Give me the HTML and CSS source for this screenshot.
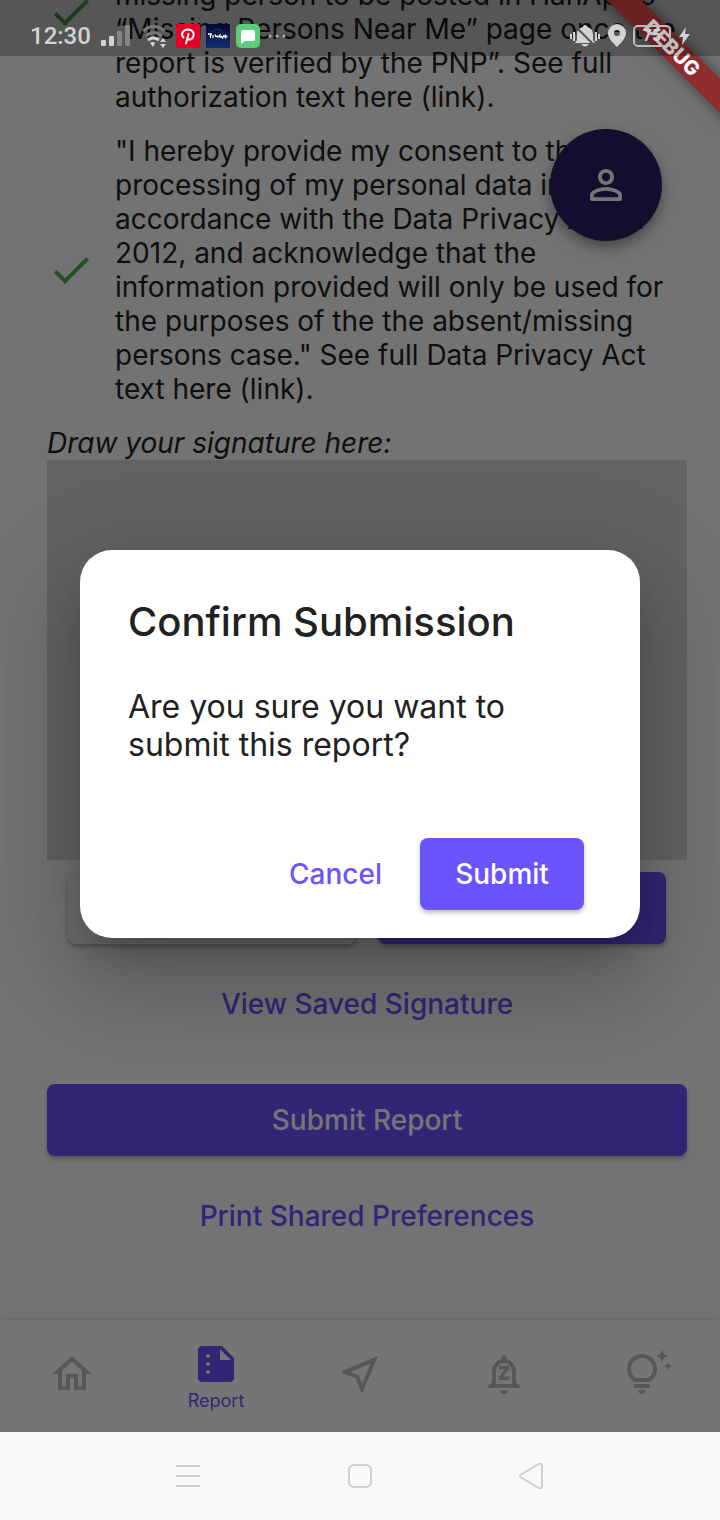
FILE: index.html
```html
<!DOCTYPE html>
<html lang="en">
<head>
<meta charset="utf-8">
<meta name="viewport" content="width=device-width, initial-scale=1">
<title>Confirm Submission</title>
<link rel="stylesheet" href="styles.css">
</head>
<body>
<div class="screen">
  <div class="app">
    <main class="page">
      <div class="consent">
        <svg class="check" viewBox="0 0 24 24" aria-hidden="true"><path d="M9 16.17 4.83 12l-1.42 1.41L9 19 21 7l-1.41-1.41z"/></svg>
        <p class="consent-text">missing person to be posted in HanApp’s “Missing Persons Near Me” page once the report is verified by the PNP”. See full authorization text here (link).</p>
      </div>
      <div class="consent">
        <svg class="check" viewBox="0 0 24 24" aria-hidden="true"><path d="M9 16.17 4.83 12l-1.42 1.41L9 19 21 7l-1.41-1.41z"/></svg>
        <p class="consent-text">"I hereby provide my consent to the processing of my personal data in accordance with the Data Privacy Act of 2012, and acknowledge that the information provided will only be used for the purposes of the the absent/missing persons case." See full Data Privacy Act text here (link).</p>
      </div>
      <p class="sign-label">Draw your signature here:</p>
      <div class="sign-pad"></div>
      <div class="sign-actions">
        <button class="btn btn-light" type="button" aria-label="Clear"></button>
        <button class="btn btn-primary" type="button" aria-label="Save"></button>
      </div>
      <button class="btn btn-text view-saved" type="button">View Saved Signature</button>
      <button class="btn btn-primary submit-report" type="button">Submit Report</button>
      <button class="btn btn-text print-prefs" type="button">Print Shared Preferences</button>
      <button class="fab" type="button" aria-label="Profile">
        <svg viewBox="0 0 24 24" aria-hidden="true"><path d="M12 5.9a2.1 2.1 0 1 1 0 4.2 2.1 2.1 0 0 1 0-4.2m0 9c2.97 0 6.1 1.46 6.1 2.1v1.1H5.9V17c0-.64 3.13-2.1 6.1-2.1M12 4C9.79 4 8 5.79 8 8s1.79 4 4 4 4-1.790 4-4-1.790-4-4-4zm0 9c-2.670 0-8 1.340-8 4v2c0 .55.45 1 1 1h14c.55 0 1-.45 1-1v-2c0-2.660-5.330-4-8-4z"/></svg>
      </button>
    </main>
    <nav class="tabs">
      <a class="tab" href="#" aria-label="Home"><svg viewBox="0 0 24 24" aria-hidden="true"><path d="m12 5.690 5 4.500V18h-2v-6H9v6H7v-7.810zM12 3 2 12h3v8h6v-6h2v6h6v-8h3z"/></svg></a>
      <a class="tab active" href="#"><svg viewBox="0 0 24 24" aria-hidden="true"><path d="M15 3H5c-1.100 0-2 .9-2 2v14c0 1.100.9 2 2 2h14c1.100 0 2-.9 2-2V9zM8 17c-.55 0-1-.45-1-1s.45-1 1-1 1 .45 1 1-.45 1-1 1m0-4c-.55 0-1-.45-1-1s.45-1 1-1 1 .45 1 1-.45 1-1 1m0-4c-.55 0-1-.45-1-1s.45-1 1-1 1 .45 1 1-.45 1-1 1m6 1V4.500l5.500 5.500z"/></svg><span>Report</span></a>
      <a class="tab" href="#" aria-label="Nearby"><svg viewBox="0 0 24 24" aria-hidden="true"><path d="m17.270 6.730-4.240 10.130-1.320-3.420-.32-.83-.82-.32-3.430-1.330zM21 3 3 10.530v.98l6.840 2.650L12.480 21h.98z"/></svg></a>
      <a class="tab" href="#" aria-label="Notifications"><svg viewBox="0 0 24 24" aria-hidden="true"><path d="M18 16v-5c0-3.070-1.640-5.640-4.500-6.320V4c0-.83-.67-1.500-1.500-1.500s-1.500.67-1.500 1.500v.68C7.630 5.360 6 7.920 6 11v5l-2 2v1h16v-1zm-2 1H8v-6c0-2.480 1.510-4.500 4-4.500s4 2.020 4 4.500zm-4 5c1.100 0 2-.9 2-2h-4c0 1.100.89 2 2 2M9.500 9.800h2.800l-2.800 3.400V15h5v-1.800h-2.800l2.800-3.400V8h-5z"/></svg></a>
      <a class="tab" href="#" aria-label="Tips"><svg viewBox="0 0 24 24" aria-hidden="true"><path d="M7 20h4c0 1.100-.9 2-2 2s-2-.9-2-2m-2-1h8v-2H5zm11.500-9.500c0 3.820-2.660 5.860-3.770 6.500H5.270c-1.110-.64-3.770-2.680-3.770-6.500C1.500 5.360 4.860 2 9 2s7.500 3.360 7.500 7.500m-2 0C14.500 6.470 12.030 4 9 4S3.500 6.470 3.500 9.500c0 2.470 1.490 3.890 2.350 4.500h6.300c.86-.61 2.350-2.030 2.350-4.500m6.870-2.130L20 8l1.370.63L22 10l.63-1.370L24 8l-1.370-.63L22 6zM19 6l.94-2.060L22 3l-2.060-.94L19 0l-.94 2.060L16 3l2.060.94z"/></svg></a>
    </nav>

    <div class="scrim">
      <section class="dialog" role="dialog" aria-modal="true" aria-labelledby="dialog-title">
        <h1 id="dialog-title">Confirm Submission</h1>
        <p>Are you sure you want to submit this report?</p>
        <div class="dialog-actions">
          <button class="btn btn-text" type="button">Cancel</button>
          <button class="btn btn-primary" type="button">Submit</button>
        </div>
      </section>
    </div>

    <div class="ribbon-corner"><span class="ribbon">DEBUG</span></div>

    <header class="status">
      <div class="status-left">
        <time>12:30</time>
        <svg class="signal" viewBox="0 0 30 24" aria-hidden="true"><g fill="#d2d2d2"><rect x="0" y="16" width="5" height="6" rx="1"/><rect x="8" y="12" width="5" height="10" rx="1"/></g><g fill="#858585"><rect x="16" y="7" width="5" height="15" rx="1"/><rect x="24" y="1" width="5" height="21" rx="1"/></g></svg>
        <svg class="wifi" viewBox="0 0 28 24" aria-hidden="true"><g fill="none" stroke-width="3"><path stroke="#777" d="M1 7q11-9 22 0M4 12q8-7 16 0"/><path stroke="#d2d2d2" d="M6 16q5-4 11 0"/></g><path fill="#d2d2d2" d="M8 19q3-2 5 0l-2 4zM18 18l3-4 3 4zM18 20h6l-3 4z"/></svg>
        <svg class="badge" viewBox="0 0 24 24" aria-hidden="true"><rect width="24" height="24" rx="1" fill="#e60023"/><path fill="none" stroke="#fff" stroke-width="2" stroke-linecap="round" stroke-linejoin="round" d="M7.500 13.500C4 9.500 7.500 5.500 12 5.500c4 0 6.500 3 5.500 6.500-1 4-5 4.500-6 2M12.500 10 10 19.500"/></svg>
        <svg class="badge" viewBox="0 0 24 24" aria-hidden="true"><defs><linearGradient id="night" x2="0" y2="1"><stop stop-color="#050730"/><stop offset="1" stop-color="#112f72"/></linearGradient></defs><rect width="24" height="24" rx="1" fill="url(#night)"/><path fill="none" stroke="#fff" stroke-width="1.300" d="M2 10h4M4.500 10v4M7 11v3M9 10.500l1 2h2M12 13l2-2v3M15 12l1.500 2 1.500-3M19.500 10.500v4M17.500 12.500h4"/><path fill="none" stroke="#3ab7d5" stroke-width=".8" stroke-dasharray="1 2" d="M6 8q7-6 12 2"/></svg>
        <svg class="badge" viewBox="0 0 24 24" aria-hidden="true"><rect width="24" height="24" rx="5" fill="#5bce79"/><path fill="#fff" d="M7 6h10q2 0 2 2v7q0 2-2 2H9l-4 3V8q0-2 2-2z"/></svg>
        <svg class="more" viewBox="0 0 20 24" aria-hidden="true"><g fill="#b4b4b4"><circle cx="2" cy="12" r="1.500"/><circle cx="9" cy="12" r="1.500"/><circle cx="16" cy="12" r="1.500"/></g></svg>
      </div>
      <div class="status-right">
        <svg class="mute" viewBox="0 0 32 24" aria-hidden="true"><path fill="#d2d2d2" d="M16 1q2 0 2 2 6 1 6 8v5l2 3H6l2-3v-5q0-7 6-8 0-2 2-2zM12 20h8q-4 5-8 0"/><path fill="none" stroke="#d2d2d2" stroke-width="2" d="M2 10v5M5 8v9M27 8v9M30 10v5"/><path stroke="#565656" stroke-width="2" d="m6 2 20 20"/></svg>
        <svg class="pin" viewBox="0 0 18 24" aria-hidden="true"><path fill="#d2d2d2" fill-rule="evenodd" d="M9 0a9 9 0 0 1 9 9c0 5-5 10-9 14C5 19 0 14 0 9a9 9 0 0 1 9-9zm0 6a3 3 0 1 0 0 6 3 3 0 0 0 0-6z"/></svg>
        <span class="battery">75</span>
        <svg class="bolt" viewBox="0 0 12 18" aria-hidden="true"><path fill="#d2d2d2" d="M8 0 1 10h4l-1 8 8-11H7z"/></svg>
      </div>
    </header>
  </div>

  <footer class="system-nav">
    <button type="button" aria-label="Recent apps"><svg viewBox="0 0 28 28" aria-hidden="true"><path d="M2 4h24M2 14h24M2 24h24"/></svg></button>
    <button type="button" aria-label="Home"><svg viewBox="0 0 28 28" aria-hidden="true"><rect x="3" y="3" width="22" height="22" rx="5"/></svg></button>
    <button type="button" aria-label="Back"><svg viewBox="0 0 28 28" aria-hidden="true"><path d="M3 12.500 21 2q3-1 3 2v20q0 3-3 2L3 15.500q-2-1.500 0-3z"/></svg></button>
  </footer>
</div>
</body>
</html>
```
FILE: styles.css
```css
* { box-sizing: border-box; }

body {
  margin: 0;
  font-family: Inter, "Liberation Sans", sans-serif;
  font-size: 28px;
  line-height: 34px;
  color: #212121;
}

p, h1 { margin: 0; }

button {
  font: inherit;
  border: 0;
  padding: 0;
  background: none;
}

.screen {
  display: flex;
  flex-direction: column;
  height: 100vh;
}

.app {
  position: relative;
  flex: 1;
  min-height: 0;
  display: flex;
  flex-direction: column;
  background: #fafafa;
  overflow: hidden;
}

/* Scrolled form */
.page {
  flex: 1;
  min-height: 0;
  display: flex;
  flex-direction: column;
  justify-content: flex-end;
  padding: 0 33px 68px 47px;
  overflow: hidden;
}

.page > * { flex-shrink: 0; }

.consent {
  display: flex;
  align-items: center;
  gap: 20px;
  min-height: 204px;
  margin-bottom: 20px;
}

.check {
  flex: none;
  width: 48px;
  height: 48px;
  fill: #4caf50;
}

.consent-text {
  flex: 1;
  align-self: flex-end;
}

.sign-label { font-style: italic; }

.sign-pad {
  height: 400px;
  background: #dbd8d4;
}

.btn {
  height: 72px;
  border-radius: 8px;
  font-weight: 500;
}

.btn-primary {
  background: #6b54ff;
  color: #fff;
  box-shadow: 0 3px 4px rgba(0, 0, 0, .25);
}

.btn-light {
  background: #f5f5f5;
  box-shadow: 0 3px 4px rgba(0, 0, 0, .25);
}

.btn-text { color: #6b54ff; }

.sign-actions {
  display: grid;
  grid-template-columns: 1fr 1fr;
  gap: 22px;
  padding: 12px 21px 0;
}

.view-saved { margin-top: 24px; }
.submit-report { margin-top: 44px; }
.print-prefs { margin-top: 24px; }

.fab {
  position: absolute;
  top: 129px;
  right: 58px;
  width: 112px;
  height: 112px;
  display: grid;
  place-items: center;
  border-radius: 50%;
  background: #2e1e63;
  box-shadow: 0 6px 14px rgba(0, 0, 0, .4);
}

.fab svg {
  width: 48px;
  height: 48px;
  fill: #fff;
}

/* Bottom tabs */
.tabs {
  flex: none;
  display: flex;
  height: 112px;
  background: #fff;
  box-shadow: 0 -1px 4px rgba(0, 0, 0, .12);
}

.tab {
  flex: 1;
  display: flex;
  flex-direction: column;
  align-items: center;
  justify-content: center;
  gap: 2px;
  padding-bottom: 4px;
  color: #bdbdbd;
  font-size: 18px;
  line-height: 22px;
  text-decoration: none;
}

.tab svg {
  width: 48px;
  height: 48px;
  fill: currentColor;
  overflow: visible;
}

.tab.active {
  padding-bottom: 0;
  color: #6b54ff;
}

/* Dialog */
.scrim {
  position: absolute;
  inset: 0;
  display: flex;
  align-items: center;
  padding: 56px 80px 0;
  background: rgba(0, 0, 0, .54);
}

.dialog {
  flex: 1;
  padding: 48px 56px 28px 48px;
  border-radius: 32px;
  background: #fff;
  box-shadow: 0 22px 30px -14px rgba(0, 0, 0, .2), 0 48px 76px 6px rgba(0, 0, 0, .14), 0 18px 92px 16px rgba(0, 0, 0, .12);
}

.dialog h1 {
  font-size: 40px;
  font-weight: 500;
  line-height: 48px;
}

.dialog p {
  margin-top: 42px;
  font-size: 32px;
  line-height: 38px;
}

.dialog-actions {
  display: flex;
  justify-content: flex-end;
  gap: 22px;
  margin-top: 74px;
}

.dialog-actions .btn-primary { min-width: 164px; }
.dialog-actions .btn-text { padding: 0 16px; }

/* Debug ribbon */
.ribbon-corner {
  position: absolute;
  top: 0;
  right: 0;
  width: 160px;
  height: 160px;
  overflow: hidden;
}

.ribbon {
  position: absolute;
  top: 36px;
  right: -52px;
  width: 200px;
  text-align: center;
  transform: rotate(45deg);
  background: #8f2b2e;
  box-shadow: 0 0 14px rgba(0, 0, 0, .5);
  color: #fff;
  font-size: 20px;
  font-weight: 800;
  line-height: 24px;
}

/* Status bar */
.status {
  position: absolute;
  inset: 0 0 auto;
  height: 56px;
  display: flex;
  justify-content: space-between;
  padding: 16px 30px 0;
  background: rgba(0, 0, 0, .25);
  color: #d2d2d2;
}

.status-left, .status-right {
  display: flex;
  align-items: center;
  height: 40px;
}

.status-left { gap: 6px; }
.status-right { gap: 7px; }

.status time {
  margin-right: 4px;
  font-family: Roboto, sans-serif;
  font-size: 24px;
  font-weight: 500;
}

.status svg { height: 24px; }
.signal { width: 30px; }
.wifi { width: 28px; margin-left: 5px; }
.badge { width: 24px; }
.more { width: 20px; margin-left: 2px; }
.mute { width: 32px; }
.pin { width: 18px; }
.status .bolt { width: 12px; height: 18px; }

.battery {
  width: 38px;
  height: 22px;
  border: 2px solid #bbb;
  border-radius: 5px;
  font-family: Roboto, sans-serif;
  font-size: 16px;
  font-weight: 700;
  line-height: 18px;
  text-align: center;
}

/* System navigation */
.system-nav {
  flex: none;
  height: 88px;
  display: flex;
  align-items: center;
  justify-content: center;
  gap: 144px;
  background: #f9f9f9;
}

.system-nav svg {
  display: block;
  width: 28px;
  height: 28px;
  fill: none;
  stroke: #cfcfcf;
  stroke-width: 2;
}
```
